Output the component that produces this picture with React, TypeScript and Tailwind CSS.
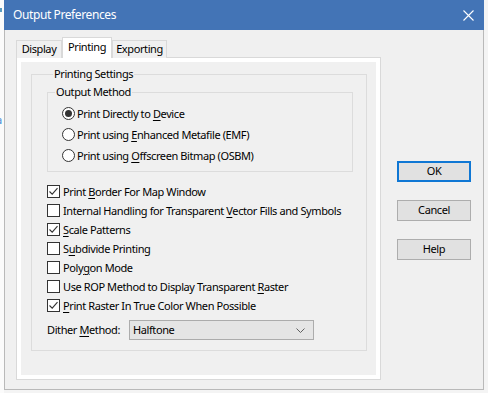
import React from "react";

const font = { fontFamily: '"Noto Sans", "Open Sans", sans-serif' };

function Radio({ checked, children }: { checked?: boolean; children: React.ReactNode }) {
  return (
    <div className="flex h-[21px] items-center">
      <span className="flex h-[13px] w-[13px] items-center justify-center rounded-full border border-[#333333] bg-white">
        {checked && <span className="h-[7px] w-[7px] rounded-full bg-[#333333]" />}
      </span>
      <span className="ml-[2px] text-[11px] leading-none text-black">{children}</span>
    </div>
  );
}

function Check({ checked, children }: { checked?: boolean; children: React.ReactNode }) {
  return (
    <div className="flex h-[19px] items-center">
      <span className="flex h-[13px] w-[13px] items-center justify-center border border-[#333333] bg-white">
        {checked && (
          <svg width="11" height="11" viewBox="0 0 11 11">
            <path d="M1.5 5.5 L4.2 8.2 L9.5 2.2" fill="none" stroke="#333333" strokeWidth="1.1" />
          </svg>
        )}
      </span>
      <span className="ml-[3px] text-[11px] leading-none text-black">{children}</span>
    </div>
  );
}

function Btn({ children, primary }: { children: React.ReactNode; primary?: boolean }) {
  return (
    <button
      type="button"
      className={
        primary
          ? "flex h-[21px] w-[74px] items-center justify-center border-2 border-[#0f77d4] bg-[#e1e1e1] text-[11px] tracking-[-0.4px] text-black"
          : "flex h-[21px] w-[74px] items-center justify-center border border-[#adadad] bg-[#e1e1e1] text-[11px] tracking-[-0.4px] text-black"
      }
    >
      {children}
    </button>
  );
}

export default function App() {
  return (
    <div className="flex h-[393px] w-[488px] overflow-hidden bg-[#f4f4f4] tracking-[-0.4px]" style={font}>
      {/* desktop strip on the left */}
      <div className="flex w-[4px] flex-col bg-[#fbfbfb]">
        <div className="mt-[8px] h-[4px] w-[2px] bg-[#5a9bc0]" />
        <div className="-ml-[4px] mt-[102px] text-[11px] leading-none text-[#3d8ad8]">a</div>
      </div>

      {/* dialog window */}
      <div className="flex h-[390px] w-[480px] flex-col">
        <div className="flex h-[30px] items-center justify-between bg-[#4374b6] pl-[9px] pr-[10px]">
          <span className="text-[12px] text-white">Output Preferences</span>
          <svg width="11" height="11" viewBox="0 0 11 11">
            <path d="M0.5 0.5 L10.5 10.5 M10.5 0.5 L0.5 10.5" stroke="#ffffff" strokeWidth="1.1" />
          </svg>
        </div>

        <div className="flex flex-1 border-x border-b border-[#b9b9b9] bg-[#f0f0f0]">
          {/* tab control */}
          <div className="ml-[11px] mt-[7px] flex flex-col">
            <div className="relative z-10 -mb-px flex items-end">
              <div className="flex h-[18px] w-[46px] items-center justify-center border border-b-0 border-[#d9d9d9] bg-[#f0f0f0] text-[11px]">
                Display
              </div>
              <div className="flex h-[21px] w-[50px] items-center justify-center border-x border-t border-[#d9d9d9] bg-white pb-[2px] text-[11px]">
                Printing
              </div>
              <div className="flex h-[18px] w-[55px] items-center justify-center border border-b-0 border-[#d9d9d9] bg-[#f0f0f0] text-[11px]">
                Exporting
              </div>
            </div>

            <div className="h-[323px] w-[365px] border border-[#d9d9d9] bg-white p-[4px]">
              <div className="h-full w-full bg-[#f0f0f0] pl-[10px] pr-[9px] pt-[4px]">
                <fieldset className="h-[285px] border border-[#dcdcdc] pl-[15px]">
                  <legend className="ml-[6px] px-[1px] text-[11px] leading-[16px]">Printing Settings</legend>

                  <fieldset className="mt-[2px] w-[306px] border border-[#dcdcdc] pb-[5px] pl-[14px] pt-[3px]">
                    <legend className="-ml-[7px] px-[1px] text-[11px] leading-[16px]">Output Method</legend>
                    <Radio checked>
                      Print Directly to <u className="underline-offset-2">D</u>evice
                    </Radio>
                    <Radio>
                      Print using <u className="underline-offset-2">E</u>nhanced Metafile (EMF)
                    </Radio>
                    <Radio>
                      Print using <u className="underline-offset-2">O</u>ffscreen Bitmap (OSBM)
                    </Radio>
                  </fieldset>

                  <div className="mt-[10px] flex flex-col">
                    <Check checked>
                      Print <u className="underline-offset-2">B</u>order For Map Window
                    </Check>
                    <Check>
                      Internal Handling for Transparent <u className="underline-offset-2">V</u>ector Fills and Symbols
                    </Check>
                    <Check checked>
                      <u className="underline-offset-2">S</u>cale Patterns
                    </Check>
                    <Check>
                      S<u className="underline-offset-2">u</u>bdivide Printing
                    </Check>
                    <Check>
                      Poly<u className="underline-offset-2">g</u>on Mode
                    </Check>
                    <Check>
                      Use ROP Method to Display Transparent <u className="underline-offset-2">R</u>aster
                    </Check>
                    <Check checked>
                      <u className="underline-offset-2">P</u>rint Raster In True Color When Possible
                    </Check>
                  </div>

                  <div className="mt-[5px] flex items-center">
                    <span className="w-[82px] text-[11px]">
                      Dither <u className="underline-offset-2">M</u>ethod:
                    </span>
                    <div className="flex h-[20px] w-[185px] items-center justify-between border border-[#acacac] bg-[#e5e5e5] pl-[3px] pr-[8px] text-[11px]">
                      <span>Halftone</span>
                      <svg width="9" height="5" viewBox="0 0 9 5">
                        <path d="M0.5 0.5 L4.5 4.5 L8.5 0.5" fill="none" stroke="#606060" strokeWidth="1" />
                      </svg>
                    </div>
                  </div>
                </fieldset>
              </div>
            </div>
          </div>

          {/* command buttons */}
          <div className="ml-[16px] mt-[131px] flex flex-col gap-[18px]">
            <Btn primary>OK</Btn>
            <Btn>Cancel</Btn>
            <Btn>Help</Btn>
          </div>
        </div>
      </div>
      <div className="w-[4px] bg-[#f4f4f4]" />
    </div>
  );
}
